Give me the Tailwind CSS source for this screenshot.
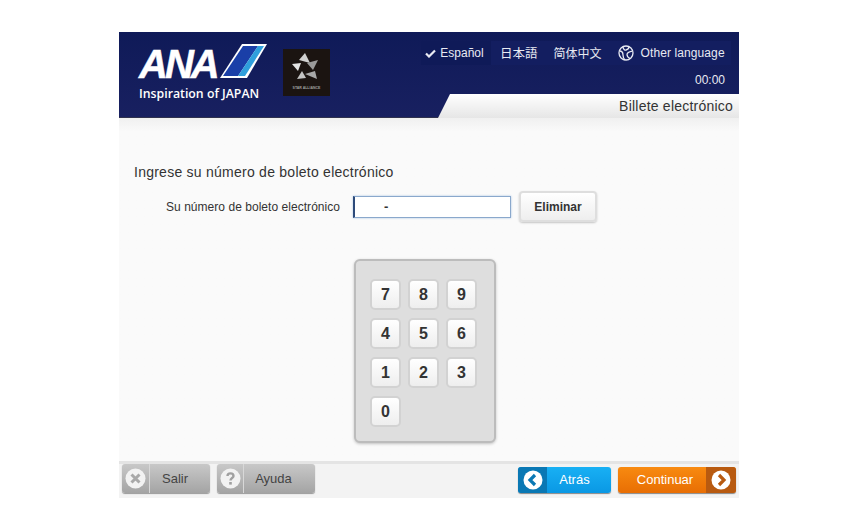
<!DOCTYPE html>
<html lang="es">
<head>
    <meta charset="UTF-8" />
    <title>ANA - Billete electrónico</title>
    <script src="https://cdn.jsdelivr.net/npm/@tailwindcss/browser@4"></script>
</head>
<body class="bg-white font-['Liberation_Sans',Arial,sans-serif] min-h-screen pt-[32px]">
    <div class="mx-auto w-[620px] h-[466px] flex flex-col bg-[#fafafa]">

        <!-- Header -->
        <header class="h-[86px] flex justify-between bg-gradient-to-b from-[#0f1a58] to-[#182060] border-b border-[#30324e]">
            <div class="flex items-start">
                <div class="ml-[20px] mt-[12px] w-[130px]">
                    <div class="flex items-start h-[40px]">
                        <span class="text-white font-bold italic text-[40px] leading-[40px] tracking-[-3px] w-[81px] [-webkit-text-stroke:0.5px_white]">ANA</span>
                        <svg class="w-[47px] h-[34px]" viewBox="0 0 47 34">
                            <polygon points="22,0 47,0 27,34 0,34" fill="#fff" />
                            <polygon points="23,2 38,2 18,32 3,32" fill="#1a3fa8" />
                            <polygon points="38,2 44,2 25,32 18,32" fill="#2f9fdc" />
                        </svg>
                    </div>
                    <p class="mt-[2px] text-white text-[12.3px] leading-[16px] font-semibold font-['Open_Sans',sans-serif] whitespace-nowrap">Inspiration of JAPAN</p>
                </div>
                <div class="ml-[14px] mt-[17px] w-[47px] h-[47px] bg-[#1b1411] flex flex-col items-center">
                    <svg class="w-[47px] h-[34px]" viewBox="0 0 47 34">
                        <polygon points="22,4 27,14 16,11" fill="#d0d0d0" />
                        <polygon points="35,11 30,21 24,14" fill="#9a9a9a" />
                        <polygon points="9,15 18,14 15,22" fill="#e4e4e4" />
                        <polygon points="14,30 19,22 23,29" fill="#c4c4c4" />
                        <polygon points="22,25 32,22 34,30" fill="#a8a8a8" />
                    </svg>
                    <span class="text-[#a0a0a0] text-[3.5px] leading-[6px] mt-[2px] font-bold whitespace-nowrap">STAR ALLIANCE</span>
                </div>
            </div>

            <div class="w-[318px] flex flex-col">
                <nav class="mt-[9px] h-[24px] flex items-center text-[#e8eaf2] bg-[#131e60] w-[310px]">
                    <span class="w-[70px] h-full flex items-center justify-center gap-[4px] bg-[#0f1a58] pr-[3px]">
                        <svg class="w-[11px] h-[9px]" viewBox="0 0 11 9"><path d="M1 4.5 L4 7.5 L10 1.5" fill="none" stroke="#e8eaf2" stroke-width="2.2" /></svg>
                        <span class="text-[12px]">Español</span>
                    </span>
                    <span class="ml-[9px] text-[12.5px] font-['Noto_Sans_CJK_JP',sans-serif]">日本語</span>
                    <span class="ml-[16px] text-[12px] font-['Noto_Sans_CJK_SC',sans-serif]">简体中文</span>
                    <svg class="ml-[16px] w-[16px] h-[16px]" viewBox="0 0 16 16" fill="none" stroke="#e8eaf2" stroke-width="1.3">
                        <circle cx="8" cy="8" r="7" />
                        <path d="M5 1.8 C5 4 7 5.5 8 5 C10 4.5 11 3 11 1.8 M1.5 6 C4 6 5 8 5 10 C5 12 6 14 7 15 M14.5 6 C12 6.5 9 7 9 9.5 C9 12 11 13 12 13.5" />
                    </svg>
                    <span class="ml-[7px] text-[12px] tracking-[0.1px] whitespace-nowrap">Other language</span>
                </nav>
                <div class="h-[29px] pr-[14px] flex items-center justify-end text-[12px] text-[#e8eaf2]">00:00</div>
                <div class="ml-[17px] h-[24px] -mb-[1px] flex items-center justify-end pr-[6px] pt-[1px] text-[14px] tracking-[0.22px] text-[#333] bg-gradient-to-b from-[#ffffff] to-[#e6e6e6] [clip-path:polygon(12px_0,100%_0,100%_100%,0_100%)]">Billete electrónico</div>
            </div>
        </header>

        <!-- Content -->
        <main class="flex-1 flex flex-col bg-gradient-to-b from-[#f0f0f0] via-[#fafafa] via-[4%] to-[#fafafa]">
            <h1 class="ml-[15px] mt-[46px] text-[14px] leading-[16px] text-[#333] tracking-[0.25px]">Ingrese su número de boleto electrónico</h1>
            <div class="mt-[11px] flex items-center h-[31px]">
                <label class="ml-[47px] w-[187px] text-[12px] text-[#333] tracking-[0.04px] whitespace-nowrap">Su número de boleto electrónico</label>
                <div class="w-[158px] h-[22px] bg-white border border-[#8aa8cc] border-l-2 border-l-[#2d4a7a] flex items-center pl-[29px] text-[13px] font-bold text-[#333] shadow-[0_0_2px_#a8c4e4]">-</div>
                <button class="ml-[8px] w-[78px] h-[31px] rounded-[4px] border-2 border-[#dedede] bg-gradient-to-b from-[#ffffff] to-[#eeeeee] text-[12px] font-bold text-[#333] shadow-[0_1px_2px_#c4c4c4]">Eliminar</button>
            </div>

            <div class="mt-[37px] ml-[235px] w-[142px] h-[184px] rounded-[6px] border-2 border-[#bcbcbc] bg-[#dedede] shadow-[0_1px_3px_#c0c0c0] pl-[15px] pt-[18px]">
                <div class="-ml-[1px] grid grid-cols-[31px_31px_31px] grid-rows-[31px_31px_31px_31px] gap-x-[7px] gap-y-[8px] text-[16px] font-bold text-[#333]">
                    <button class="rounded-[5px] border-2 border-[#d2d2d2] bg-gradient-to-b from-[#ffffff] to-[#eeeeee]">7</button>
                    <button class="rounded-[5px] border-2 border-[#d2d2d2] bg-gradient-to-b from-[#ffffff] to-[#eeeeee]">8</button>
                    <button class="rounded-[5px] border-2 border-[#d2d2d2] bg-gradient-to-b from-[#ffffff] to-[#eeeeee]">9</button>
                    <button class="rounded-[5px] border-2 border-[#d2d2d2] bg-gradient-to-b from-[#ffffff] to-[#eeeeee]">4</button>
                    <button class="rounded-[5px] border-2 border-[#d2d2d2] bg-gradient-to-b from-[#ffffff] to-[#eeeeee]">5</button>
                    <button class="rounded-[5px] border-2 border-[#d2d2d2] bg-gradient-to-b from-[#ffffff] to-[#eeeeee]">6</button>
                    <button class="rounded-[5px] border-2 border-[#d2d2d2] bg-gradient-to-b from-[#ffffff] to-[#eeeeee]">1</button>
                    <button class="rounded-[5px] border-2 border-[#d2d2d2] bg-gradient-to-b from-[#ffffff] to-[#eeeeee]">2</button>
                    <button class="rounded-[5px] border-2 border-[#d2d2d2] bg-gradient-to-b from-[#ffffff] to-[#eeeeee]">3</button>
                    <button class="rounded-[5px] border-2 border-[#d2d2d2] bg-gradient-to-b from-[#ffffff] to-[#eeeeee]">0</button>
                </div>
            </div>
        </main>

        <!-- Footer -->
        <footer class="h-[37px] flex items-start bg-[#f3f3f3] border-t-[3px] border-[#e4e4e4] text-[13px] pl-[3px] pr-[3px]">
            <button class="w-[88px] h-[29px] flex items-center rounded-[3px] bg-gradient-to-b from-[#c8c8c8] to-[#a4a4a4] text-[#444] shadow-[0_1px_1px_#999]">
                <span class="w-[28px] h-full flex items-center justify-center border-r border-[#d8d8d8]">
                    <svg class="w-[21px] h-[21px]" viewBox="0 0 21 21"><circle cx="10.5" cy="10.5" r="10" fill="#f2f2f2" /><path d="M6.5 6.5 L14.5 14.5 M14.5 6.5 L6.5 14.5" stroke="#a8a8a8" stroke-width="3" /></svg>
                </span>
                <span class="flex-1 text-center pr-[10px]">Salir</span>
            </button>
            <button class="ml-[7px] w-[98px] h-[29px] flex items-center rounded-[3px] bg-gradient-to-b from-[#c8c8c8] to-[#a4a4a4] text-[#444] shadow-[0_1px_1px_#999]">
                <span class="w-[27px] h-full flex items-center justify-center border-r border-[#d8d8d8]">
                    <svg class="w-[21px] h-[21px]" viewBox="0 0 21 21"><circle cx="10.5" cy="10.5" r="10" fill="#f2f2f2" /><path d="M7.5 8 C7.5 4.5 13.5 4.5 13.5 8 C13.5 10 10.5 10 10.5 12.5" fill="none" stroke="#a0a0a0" stroke-width="2.4" /><rect x="9.2" y="14" width="2.6" height="2.6" fill="#a0a0a0" /></svg>
                </span>
                <span class="flex-1 text-center pr-[12px]">Ayuda</span>
            </button>
            <button class="ml-auto w-[93px] h-[26px] mt-[3px] flex items-center rounded-[3px] bg-gradient-to-b from-[#18b0f4] to-[#0a98e4] text-white shadow-[0_1px_1px_#888]">
                <span class="w-[29px] h-full flex items-center justify-center rounded-l-[3px] bg-[#0a78b4]">
                    <svg class="w-[20px] h-[20px]" viewBox="0 0 20 20"><circle cx="10" cy="10" r="9.5" fill="#fff" /><path d="M12 5 L7 10 L12 15" fill="none" stroke="#0a78b4" stroke-width="3.2" /></svg>
                </span>
                <span class="flex-1 text-center pr-[9px]">Atrás</span>
            </button>
            <button class="ml-[7px] w-[118px] h-[26px] mt-[3px] flex items-center rounded-[3px] bg-gradient-to-b from-[#f88a10] to-[#e86e04] text-white shadow-[0_1px_1px_#888]">
                <span class="flex-1 text-center pl-[6px]">Continuar</span>
                <span class="w-[30px] h-full flex items-center justify-center rounded-r-[3px] bg-[#b85a10]">
                    <svg class="w-[20px] h-[20px]" viewBox="0 0 20 20"><circle cx="10" cy="10" r="9.5" fill="#fff" /><path d="M8 5 L13 10 L8 15" fill="none" stroke="#b85a10" stroke-width="3.2" /></svg>
                </span>
            </button>
        </footer>
    </div>
</body>
</html>
